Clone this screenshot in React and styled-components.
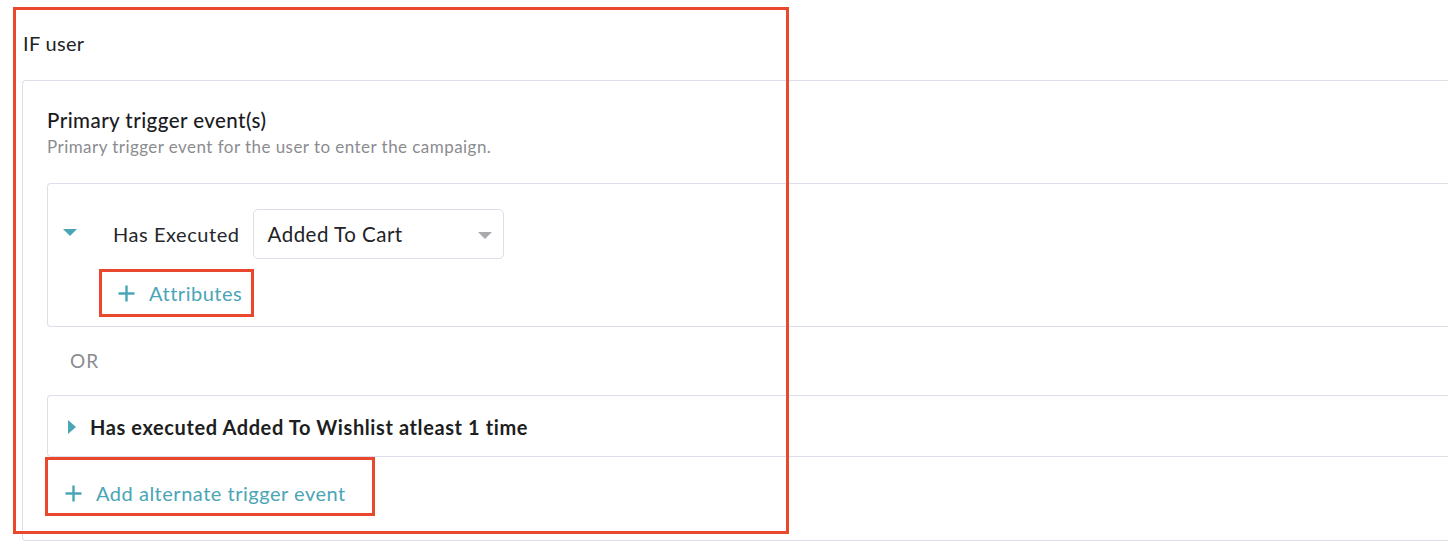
import React from "react";
import styled, { createGlobalStyle } from "styled-components";

const Global = createGlobalStyle`
  html, body { margin: 0; padding: 0; background: #ffffff; overflow: hidden; }
  body { font-family: "Lato", "Liberation Sans", sans-serif; color: #222326; }
`;

const Page = styled.div`
  position: relative;
  padding: 31px 0 0 22px;
  width: 1448px;
  height: 548px;
  box-sizing: border-box;
`;

const Annotation = styled.div`
  position: absolute;
  left: 13px;
  top: 7px;
  width: 776px;
  height: 527px;
  box-sizing: border-box;
  border: 3px solid #e9482d;
  pointer-events: none;
`;

const Title = styled.div`
  font-size: 20px;
  line-height: 24px;
  letter-spacing: 0.3px;
  padding-left: 1px;
  margin-bottom: 25px;
`;

const Card = styled.div`
  border: 1px solid #dcdfea;
  border-right: none;
  border-radius: 4px 0 0 4px;
  padding: 27px 0 24px 24px;
`;

const Heading = styled.div`
  font-size: 20.5px;
  line-height: 24px;
  font-weight: 500;
  letter-spacing: 0.45px;
  color: #1a1b1e;
`;

const Description = styled.div`
  margin-top: 4px;
  font-size: 17px;
  line-height: 22px;
  letter-spacing: 0.45px;
  color: #8b8c8f;
  margin-bottom: 25px;
`;

const EventCard = styled.div`
  border: 1px solid #dcdfea;
  border-right: none;
  border-radius: 4px 0 0 4px;
  padding: ${(p) => p.$pad};
`;

const Row = styled.div`
  display: flex;
  align-items: center;
  height: ${(p) => p.$h || "auto"};
`;

const Caret = styled.span`
  display: inline-block;
  width: 0;
  height: 0;
  ${(p) =>
    p.$dir === "down"
      ? `border-left: 7px solid transparent;
         border-right: 7px solid transparent;
         border-top: 7px solid #4aa5b6;
         margin-top: -4px;
         margin-right: 36px;`
      : `border-top: 7px solid transparent;
         border-bottom: 7px solid transparent;
         border-left: 8px solid #4aa5b6;
         margin-left: 5px;
         margin-right: 14px;`}
`;

const Label = styled.span`
  font-size: 20px;
  line-height: 24px;
  letter-spacing: 0.55px;
  color: #26272a;
  margin-right: 13px;
`;

const Select = styled.div`
  width: 251px;
  height: 50px;
  box-sizing: border-box;
  border: 1px solid #dcdfea;
  border-radius: 5px;
  display: flex;
  align-items: center;
  justify-content: space-between;
  padding: 0 11px 0 14px;
  font-size: 20.5px;
  letter-spacing: 0.5px;
  color: #222326;
`;

const SelectArrow = styled.span`
  width: 0;
  height: 0;
  border-left: 7px solid transparent;
  border-right: 7px solid transparent;
  border-top: 7px solid #a9aaad;
  margin-top: 2px;
`;

const Highlight = styled.div`
  display: inline-flex;
  align-items: center;
  border: 3px solid #e9482d;
  padding: ${(p) => p.$pad};
  margin: ${(p) => p.$margin};
`;

const LinkText = styled.span`
  font-size: 20px;
  line-height: 22px;
  letter-spacing: 0.52px;
  color: #4aa5b6;
  display: inline-flex;
  align-items: center;
  gap: 14px;
`;

const Or = styled.div`
  font-size: 19px;
  line-height: 20px;
  letter-spacing: 1px;
  color: #8b8c8f;
  padding: 24px 0 24px 23px;
`;

const Summary = styled.span`
  font-size: 20px;
  line-height: 22px;
  font-weight: 700;
  letter-spacing: 0.6px;
  color: #1d1e21;
`;

const Plus = () => (
  <svg width="17" height="17" viewBox="0 0 17 17" fill="none">
    <path d="M8.5 0.5v16M0.5 8.5h16" stroke="#4aa5b6" strokeWidth="2.4" />
  </svg>
);

export default function App() {
  return (
    <>
      <Global />
      <Page>
        <Title>IF user</Title>
        <Card>
          <Heading>Primary trigger event(s)</Heading>
          <Description>
            Primary trigger event for the user to enter the campaign.
          </Description>
          <EventCard $pad="25px 0 9px 15px">
            <Row $h="50px">
              <Caret $dir="down" />
              <Label>Has Executed</Label>
              <Select>
                <span>Added To Cart</span>
                <SelectArrow />
              </Select>
            </Row>
            <Highlight $pad="10px 9px 10px 16px" $margin="10px 0 0 36px">
              <LinkText>
                <Plus />
                Attributes
              </LinkText>
            </Highlight>
          </EventCard>
          <Or>OR</Or>
          <EventCard $pad="20px 0 18px 15px">
            <Row>
              <Caret $dir="right" />
              <Summary>Has executed Added To Wishlist atleast 1 time</Summary>
            </Row>
          </EventCard>
          <Highlight $pad="22px 26px 9px 17px" $margin="0 0 0 -2px">
            <LinkText>
              <Plus />
              Add alternate trigger event
            </LinkText>
          </Highlight>
        </Card>
        <Annotation />
      </Page>
    </>
  );
}
